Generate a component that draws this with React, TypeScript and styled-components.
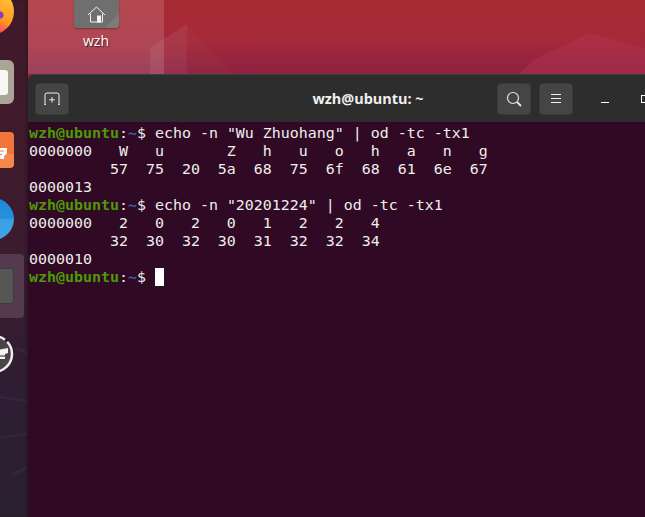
import React from 'react';
import styled, { createGlobalStyle } from 'styled-components';

const GlobalStyle = createGlobalStyle`
  html, body {
    margin: 0;
    padding: 0;
    width: 100%;
    height: 100%;
    overflow: hidden;
    background: #300a24;
  }
`;

const Screen = styled.div`
  display: flex;
  width: 645px;
  height: 517px;
  overflow: hidden;
`;

const Dock = styled.div`
  position: relative;
  flex: 0 0 28px;
  width: 28px;
  min-width: 0;
  height: 517px;
  display: flex;
  flex-direction: column;
  align-items: flex-end;
  padding-right: 14px;
  box-sizing: border-box;
  overflow: hidden;
  background: linear-gradient(180deg, #411a29 0%, #3d1b2e 45%, #2f1d33 75%, #2a2030 100%);
  box-shadow: inset -2px 0 2px rgba(20, 20, 20, 0.35);
`;

const DockStreaks = styled.svg`
  position: absolute;
  left: 0;
  top: 340px;
`;

const DockSlot = styled.div<{ $top: number }>`
  flex: none;
  margin-top: ${(p) => p.$top}px;
  display: flex;
  justify-content: flex-end;
`;

const FilesIcon = styled.div`
  width: 44px;
  height: 44px;
  display: flex;
  align-items: center;
  justify-content: flex-end;
  padding-right: 6px;
  box-sizing: border-box;
  border-radius: 6px;
  background: #aaa596;
`;

const FilesPage = styled.div`
  width: 30px;
  height: 25px;
  border-radius: 3px;
  background: #f8f6f3;
`;

const SoftwareIcon = styled.div`
  width: 36px;
  height: 36px;
  display: flex;
  align-items: center;
  justify-content: flex-end;
  padding: 8px 6px 0 0;
  box-sizing: border-box;
  border-radius: 4px;
  background: linear-gradient(180deg, #f1763a 0%, #ef7436 60%, #f2894f 60%, #f4874a 100%);
`;

const BlueOrb = styled.div`
  width: 42px;
  height: 42px;
  border-radius: 50%;
  background: linear-gradient(180deg, #1e8ad8 0%, #2490de 48%, #3ba0e6 52%, #40a4ea 100%);
`;

const ActiveSlot = styled.div`
  width: 42px;
  height: 64px;
  margin-right: -10px;
  display: flex;
  align-items: center;
  justify-content: flex-end;
  padding-right: 10px;
  box-sizing: border-box;
  border-radius: 4px;
  background: #55394f;
`;

const TerminalTile = styled.div`
  width: 36px;
  height: 36px;
  box-sizing: border-box;
  border-radius: 4px;
  border: 1px solid #3c3c3c;
  background: #565656;
`;

const Desktop = styled.div`
  position: relative;
  flex: 1;
  height: 517px;
  background: linear-gradient(180deg, #a82a31 0, #a5293a 40px, #8c2241 75px, #8c2241 100%);
`;

const Wallpaper = styled.svg`
  position: absolute;
  left: 0;
  top: 0;
`;

const SelectedArea = styled.div`
  position: relative;
  width: 136px;
  height: 74px;
  display: flex;
  flex-direction: column;
  align-items: center;
  background: rgba(255, 255, 255, 0.14);
`;

const FolderTile = styled.div`
  width: 45px;
  height: 28px;
  display: flex;
  align-items: center;
  justify-content: center;
  border-radius: 0 0 4px 4px;
  background: linear-gradient(135deg, #6f6f6f 0%, #6f6f6f 80%, #7c7a7a 80%, #7c7a7a 100%);
  box-shadow: 0 1px 2px rgba(50, 20, 20, 0.45);
`;

const FolderLabel = styled.div`
  margin-top: 4px;
  font-family: 'Open Sans', 'Noto Sans', sans-serif;
  font-size: 14px;
  line-height: 17px;
  color: #ffffff;
  text-shadow: 1px 1px 1px rgba(0, 0, 0, 0.6);
`;

const TerminalWindow = styled.div`
  position: absolute;
  left: 0;
  top: 74px;
  width: 680px;
  height: 443px;
  display: flex;
  flex-direction: column;
  border-radius: 8px 8px 0 0;
  overflow: hidden;
  background: #300a24;
`;

const HeaderBar = styled.div`
  flex: 0 0 48px;
  box-sizing: border-box;
  display: grid;
  grid-template-columns: 1fr auto 1fr;
  align-items: center;
  padding: 0 7px;
  background: #2d2d2d;
  border-top: 1px solid #3f3f3f;
`;

const HeaderLeft = styled.div`
  display: flex;
`;

const HeaderRight = styled.div`
  display: flex;
  justify-content: flex-end;
  align-items: center;
  gap: 8px;
`;

const HeaderButton = styled.div`
  width: 34px;
  height: 32px;
  display: flex;
  align-items: center;
  justify-content: center;
  box-sizing: border-box;
  border-radius: 4px;
  border: 1px solid #3a3a3a;
  background: #454545;
`;

const Title = styled.div`
  font-family: 'Open Sans', 'Noto Sans', sans-serif;
  font-weight: 700;
  font-size: 14.4px;
  color: #f0f0f0;
  white-space: nowrap;
`;

const WindowControls = styled.div`
  display: flex;
  align-items: center;
  margin-left: 4px;
  margin-right: -4px;
`;

const ControlSlot = styled.div`
  width: 40px;
  height: 24px;
  display: flex;
  align-items: center;
  justify-content: center;
`;

const MinimizeGlyph = styled.div`
  width: 8px;
  height: 1px;
  margin-top: 8px;
  background: #ffffff;
`;

const MaximizeGlyph = styled.div`
  width: 8px;
  height: 8px;
  box-sizing: border-box;
  border: 1px solid #ffffff;
`;

const Console = styled.pre`
  flex: 1;
  margin: 0;
  padding: 2px 0 0 1px;
  font-family: 'DejaVu Sans Mono', 'Liberation Mono', monospace;
  font-size: 14.95px;
  line-height: 18px;
  color: #eeeeec;
`;

const PromptUser = styled.span`
  font-weight: 700;
  color: #4e9a06;
`;

const PromptPath = styled.span`
  font-weight: 700;
  color: #3465a4;
`;

const Cursor = styled.span`
  display: inline-block;
  width: 9px;
  height: 18px;
  vertical-align: top;
  background: #ffffff;
`;

function Prompt() {
  return (
    <>
      <PromptUser>wzh@ubuntu</PromptUser>:<PromptPath>~</PromptPath>$
    </>
  );
}

function App() {
  return (
    <Screen>
      <GlobalStyle />
      <Dock>
        <DockSlot $top={-12}>
          <svg width="47" height="47" viewBox="0 0 47 47">
            <defs>
              <linearGradient id="fox" x1="0.9" y1="0.1" x2="0.4" y2="1">
                <stop offset="0" stopColor="#ffc83a" />
                <stop offset="0.55" stopColor="#ff9a1f" />
                <stop offset="0.85" stopColor="#ff3a66" />
                <stop offset="1" stopColor="#e21fa0" />
              </linearGradient>
            </defs>
            <circle cx="23.5" cy="23.5" r="23.5" fill="url(#fox)" />
            <circle cx="33" cy="27" r="3.5" fill="#8a3bc0" />
          </svg>
        </DockSlot>
        <DockSlot $top={25}>
          <FilesIcon>
            <FilesPage />
          </FilesIcon>
        </DockSlot>
        <DockSlot $top={28}>
          <SoftwareIcon>
            <svg width="12" height="18" viewBox="0 0 12 18">
              <path d="M0 3h11v5q-1 2-3 3v3H0z" fill="#fff" />
              <path d="M0 6h8M0 9.5h6" stroke="#f1763a" strokeWidth="1" />
            </svg>
          </SoftwareIcon>
        </DockSlot>
        <DockSlot $top={30}>
          <BlueOrb />
        </DockSlot>
        <DockSlot $top={14}>
          <ActiveSlot>
            <TerminalTile />
          </ActiveSlot>
        </DockSlot>
        <DockSlot $top={16}>
          <svg width="40" height="40" viewBox="0 0 40 40">
            <circle cx="20" cy="20" r="17" fill="#4a4448" />
            <circle cx="20" cy="20" r="18" fill="none" stroke="#f0eeee" strokeWidth="2.5" strokeDasharray="30 3" />
            <path d="M18 17l16-3v5l-3 1v5H20v-3l-2-2z" fill="#f2f2f2" />
            <path d="M20 22h11" stroke="#4a4448" strokeWidth="1.2" />
          </svg>
        </DockSlot>
        <DockStreaks width="28" height="177" viewBox="0 0 28 177">
          <g stroke="#ffffff" strokeOpacity="0.04" strokeWidth="2.5" fill="none">
            <path d="M16 8l11 5" />
            <path d="M0 57l26 4" />
            <path d="M0 98l27-4" />
            <path d="M13 134l14-6" />
          </g>
        </DockStreaks>
      </Dock>
      <Desktop>
        <Wallpaper width="617" height="74" viewBox="0 0 617 74">
          <path d="M122 74V48L159 24V74Z" fill="#ffffff" fillOpacity="0.07" />
          <path d="M159 24L205 74H159Z" fill="#ffffff" fillOpacity="0.02" />
          <path d="M491 74L505 60L561 33L617 48V74Z" fill="#c03c5a" fillOpacity="0.3" />
        </Wallpaper>
        <SelectedArea>
          <FolderTile>
            <svg width="19" height="17" viewBox="0 0 19 17" fill="none" stroke="#f2f2f2" strokeWidth="1">
              <path d="M1 9L9.5 1L18 9" />
              <path d="M3.5 7.5V16H15.5V7.5" />
              <rect x="10.5" y="10" width="3" height="6" fill="#f2f2f2" />
            </svg>
          </FolderTile>
          <FolderLabel>wzh</FolderLabel>
        </SelectedArea>
        <TerminalWindow>
          <HeaderBar>
            <HeaderLeft>
              <HeaderButton>
                <svg width="16" height="13" viewBox="0 0 16 13" fill="none" stroke="#f0f0f0" strokeWidth="1">
                  <path d="M1 12.5V3Q1 1 3 1H13Q15 1 15 3V12.5" />
                  <path d="M0.5 12.5H2M14 12.5H15.5" />
                  <path d="M8 5V10.5M5.2 7.8H10.8" />
                </svg>
              </HeaderButton>
            </HeaderLeft>
            <Title>wzh@ubuntu: ~</Title>
            <HeaderRight>
              <HeaderButton>
                <svg width="16" height="16" viewBox="0 0 16 16" fill="none" stroke="#e6e6e6" strokeWidth="1.2">
                  <circle cx="7" cy="7" r="5.5" />
                  <path d="M11 11L15 15" strokeWidth="1.8" />
                </svg>
              </HeaderButton>
              <HeaderButton>
                <svg width="12" height="10" viewBox="0 0 12 10" stroke="#f0f0f0" strokeWidth="1">
                  <path d="M1 .5H11M1 4.5H11M1 8.5H11" />
                </svg>
              </HeaderButton>
              <WindowControls>
                <ControlSlot>
                  <MinimizeGlyph />
                </ControlSlot>
                <ControlSlot>
                  <MaximizeGlyph />
                </ControlSlot>
                <ControlSlot />
              </WindowControls>
            </HeaderRight>
          </HeaderBar>
          <Console>
            <Prompt /> echo -n "Wu Zhuohang" | od -tc -tx1{'\n'}
            {'0000000   W   u       Z   h   u   o   h   a   n   g\n'}
            {'         57  75  20  5a  68  75  6f  68  61  6e  67\n'}
            {'0000013\n'}
            <Prompt /> echo -n "20201224" | od -tc -tx1{'\n'}
            {'0000000   2   0   2   0   1   2   2   4\n'}
            {'         32  30  32  30  31  32  32  34\n'}
            {'0000010\n'}
            <Prompt /> <Cursor />
          </Console>
        </TerminalWindow>
      </Desktop>
    </Screen>
  );
}

export default App;
